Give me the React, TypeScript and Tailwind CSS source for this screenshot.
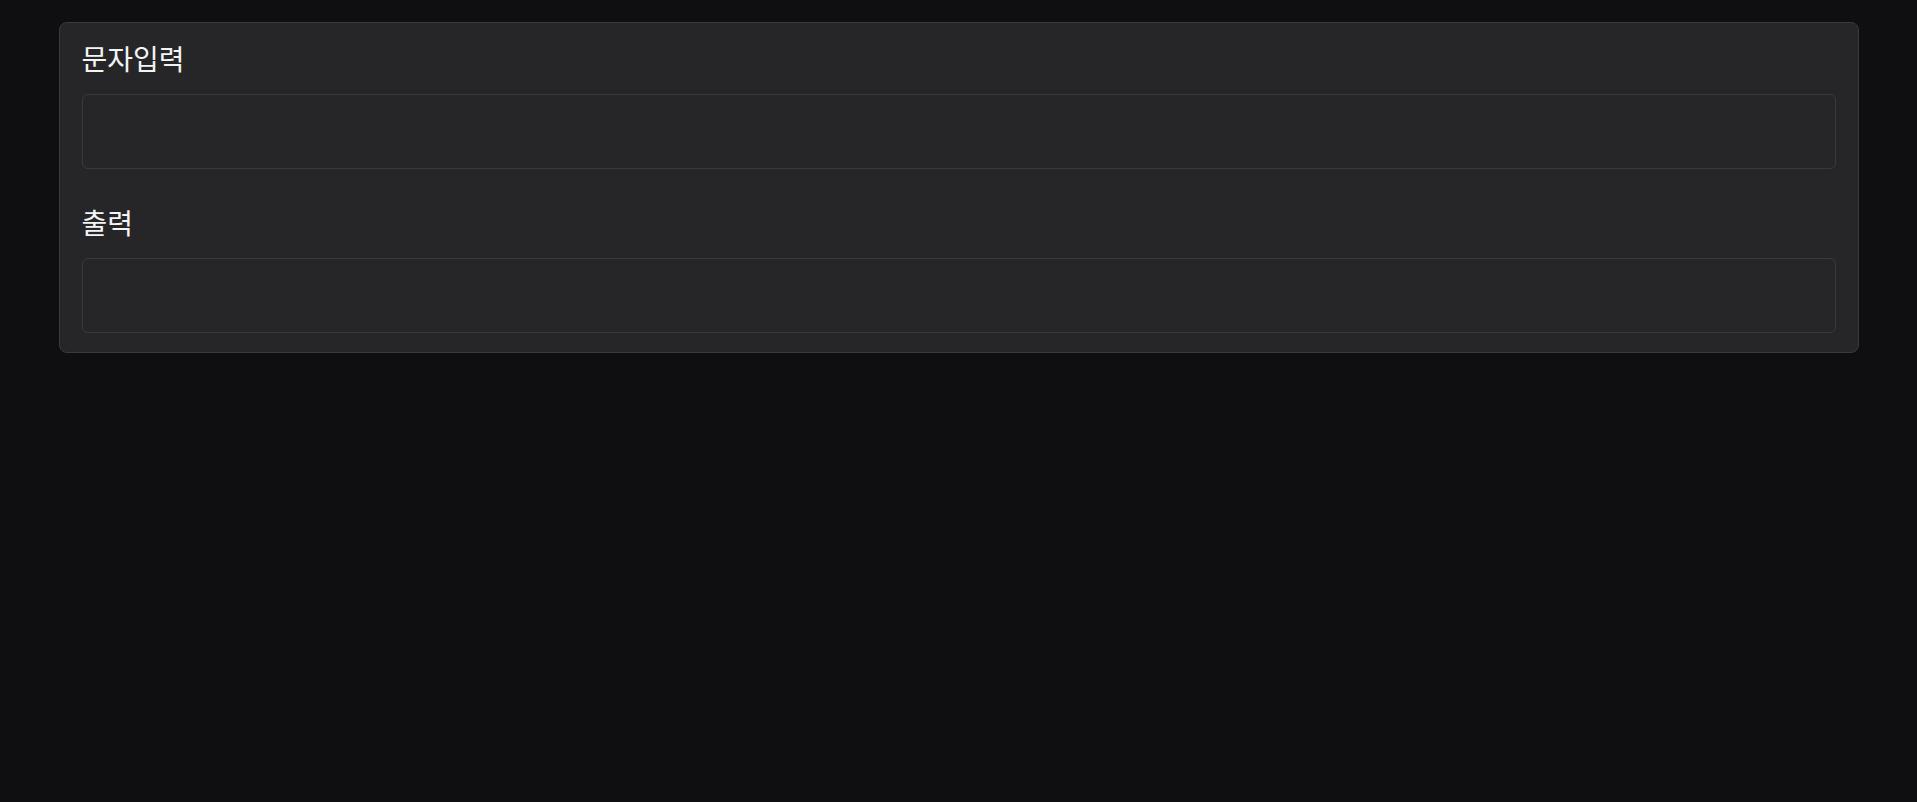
import { useState } from "react";

const font = { fontFamily: '"Noto Sans CJK KR", "Noto Sans", sans-serif' };

function Field({ label, value, onChange, readOnly }: { label: string; value: string; onChange?: (v: string) => void; readOnly?: boolean }) {
  return (
    <div className="flex flex-col">
      <label className="text-[28px] leading-[42px] text-[#f4f4f5] mb-[15px]">{label}</label>
      <input
        className="h-[75px] w-full rounded-md border border-[#3a3a3d] bg-[#262628] px-3 text-lg text-[#f4f4f5] outline-none"
        value={value}
        readOnly={readOnly}
        onChange={(e) => onChange?.(e.target.value)}
      />
    </div>
  );
}

export default function App() {
  const [text, setText] = useState("");

  return (
    <div className="min-h-screen bg-[#0f0f11] pt-[22px]" style={font}>
      <div className="mx-auto w-[1800px] rounded-lg border border-[#3a3a3d] bg-[#262628] px-[22px] pt-[14px] pb-[19px] flex flex-col gap-[32px]">
        <Field label="문자입력" value={text} onChange={setText} />
        <Field label="출력" value={text} readOnly />
      </div>
    </div>
  );
}
